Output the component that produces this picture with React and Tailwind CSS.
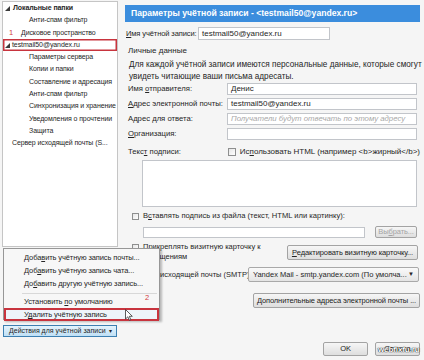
import React from "react";

const Tri = () => (
  <svg width="5" height="5" viewBox="0 0 5 5" className="shrink-0">
    <path d="M5 0 L5 5 L0 5 Z" fill="#3a3a3a" />
  </svg>
);

const Box = ({ className = "" }) => (
  <div className={"shrink-0 border border-[#8e8f8f] bg-gradient-to-br from-[#e6e6e6] to-white " + className} />
);

const Btn = ({ children, className = "" }) => (
  <div className={"flex items-center justify-center border border-[#a3a3a3] rounded-[2px] bg-gradient-to-b from-[#f6f6f6] to-[#dedede] text-[#222] text-[7.5px] tracking-[-0.1px] " + className}>
    {children}
  </div>
);

const Field = ({ children, className = "" }) => (
  <div className={"flex items-center border border-[#c2c5ca] bg-white px-[3px] overflow-hidden " + className}>{children}</div>
);

export default function App() {
  const tree = [
    { t: "Анти-спам фильтр", x: "pl-[26px]" },
    { t: "Дисковое пространство", x: "pl-[18px]", n: true },
  ];
  const sub = [
    "Параметры сервера",
    "Копии и папки",
    "Составление и адресация",
    "Анти-спам фильтр",
    "Синхронизация и хранение",
    "Уведомления о прочтении",
    "Защита",
  ];
  return (
    <div className="relative flex w-[424px] h-[360px] overflow-hidden whitespace-nowrap bg-[#f5f5f5] font-['Liberation_Sans',Arial,sans-serif] text-[8px] text-[#262626]">
      {/* left column */}
      <div className="flex flex-col w-[124px] pl-[2px] pt-[1px]">
        <div className="w-[116px] h-[246px] bg-white border border-[#c5c5c5] leading-[12.3px] text-[7px] tracking-[-0.1px]">
          <div className="flex items-center gap-[3px] pl-[2px] h-[12.3px] font-bold">
            <Tri />
            <span>Локальные папки</span>
          </div>
          {tree.map((r) => (
            <div key={r.t} className={"relative flex items-center h-[12.3px] " + r.x}>
              {r.n && <span className="absolute left-[6px] text-[#d23c3c] text-[7.5px]">1</span>}
              <span>{r.t}</span>
            </div>
          ))}
          <div className="flex items-center gap-[2px] pl-[2px] h-[12.3px] shadow-[inset_0_0_0_1.5px_#c8343e]">
            <Tri />
            <span>testmail50@yandex.ru</span>
          </div>
          {sub.map((t, i) => (
            <div key={i} className="flex items-center h-[12.3px] pl-[26px]">{t}</div>
          ))}
          <div className="flex items-center h-[12.3px] pl-[9px]">Сервер исходящей почты (S...</div>
        </div>
        <div className="mt-auto mb-[23px] ml-[1px] w-[114px] h-[12px] flex items-center pl-[5px] border border-[#3c7fb1] bg-gradient-to-b from-[#e4f3fc] to-[#bfe0f6] text-[7px]">
          <span><span className="underline">Д</span>ействия для учётной записи</span>
          <span className="ml-[3px] text-[6px]">▾</span>
        </div>
      </div>

      {/* right column */}
      <div className="flex flex-col w-[296px] pt-[5px]">
        <div className="ml-[1px] h-[17px] bg-[#3b8ddd] text-white font-bold text-[8.6px] leading-[17px] pl-[6px]">
          Параметры учётной записи - &lt;testmail50@yandex.ru&gt;
        </div>
        <div className="flex items-center mt-[5px] h-[13px] pl-[2px]">
          <span className="w-[72px] text-[7.5px] tracking-[-0.1px]"><span className="underline">И</span>мя учётной записи:</span>
          <Field className="w-[132px] h-[13px]">testmail50@yandex.ru</Field>
        </div>
        <div className="mt-[5px] h-[12px] leading-[12px] pl-[4px]">Личные данные</div>
        <div className="mt-[2px] pl-[5px] leading-[12px] text-[8.2px]">
          Для каждой учётной записи имеются персональные данные, которые смогут
          <br />
          увидеть читающие ваши письма адресаты.
        </div>
        <div className="flex flex-col gap-[3px] pl-[4px]">
          <div className="flex items-center h-[12px]">
            <span className="w-[99px] text-[7.7px]">Имя <span className="underline">о</span>тправителя:</span>
            <Field className="w-[190px] h-[12px]">Денис</Field>
          </div>
          <div className="flex items-center h-[12px]">
            <span className="w-[99px] text-[7.7px]"><span className="underline">А</span>дрес электронной почты:</span>
            <Field className="w-[190px] h-[12px]">testmail50@yandex.ru</Field>
          </div>
          <div className="flex items-center h-[12px]">
            <span className="w-[99px] text-[7.7px]">Адрес для ответа:</span>
            <Field className="w-[190px] h-[12px] italic text-[#a8a8a8] text-[7.8px]">Получатели будут отвечать по этому адресу</Field>
          </div>
          <div className="flex items-center h-[12px]">
            <span className="w-[99px] text-[7.7px]"><span className="underline">О</span>рганизация:</span>
            <Field className="w-[190px] h-[12px]" />
          </div>
        </div>
        <div className="flex items-center mt-[6px] h-[12px] pl-[4px]">
          <span className="w-[101px] text-[7.7px]">Текс<span className="underline">т</span> подписи:</span>
          <Box className="w-[8px] h-[8px]" />
          <span className="ml-[4px]">Ис<span className="underline">п</span>ользовать HTML (например &lt;b&gt;жирный&lt;/b&gt;)</span>
        </div>
        <div className="mt-[2px] ml-[18px] w-[275px] h-[47px] bg-white border border-[#c2c5ca]" />
        <div className="flex items-center mt-[3px] h-[12px] pl-[8px] text-[7.6px]">
          <Box className="w-[7px] h-[7px]" />
          <span className="ml-[4px]">В<span className="underline">с</span>тавлять подпись из файла (текст, HTML или картинку):</span>
        </div>
        <div className="flex items-center mt-[4px] h-[12px] pl-[19px]">
          <Field className="w-[222px] h-[11px]" />
          <Btn className="ml-[10px] w-[42px] h-[12px] !text-[#a4a4a4]">Вы<span className="underline">б</span>рать...</Btn>
        </div>
        <div className="flex mt-[4px] pl-[8px] text-[7.5px]">
          <Box className="w-[7px] h-[7px] mt-[2px]" />
          <div className="ml-[4px] w-[140px] leading-[10px]">
            Прикреплять визитную карточку к<br />сообщениям
          </div>
          <Btn className="ml-[4px] mt-[3px] w-[131px] h-[15px]"><span className="underline">Р</span>едактировать визитную карточку...</Btn>
        </div>
        <div className="flex items-center mt-[5px] h-[15px] pl-[8px] text-[7.5px]">
          <span className="w-[116px]">Сервер исходящей почты (SMTP)</span>
          <div className="flex items-center justify-between w-[171px] h-[15px] px-[4px] border border-[#a9a9a9] rounded-[2px] bg-gradient-to-b from-[#fafafa] to-[#e4e4e4]">
            <span>Yandex Mail - smtp.yandex.com (По умолча...</span>
            <span className="text-[6px]">▼</span>
          </div>
        </div>
        <div className="flex justify-end mt-[11px]">
          <Btn className="w-[167px] h-[15px]"><span className="underline">Д</span>ополнительные адреса электронной почты ...</Btn>
        </div>
        <div className="flex justify-end gap-[7px] mt-[34px]">
          <Btn className="w-[45px] h-[14px]">OK</Btn>
          <Btn className="relative w-[45px] h-[14px]">
            Отмена
            <span className="absolute left-[2px] top-[3px] text-[8px] font-bold text-white [text-shadow:0_0_1px_#000,0_0_1px_#000] leading-none">webfixfu.ru</span>
          </Btn>
        </div>
      </div>

      {/* popup menu */}
      <div className="absolute left-[3px] top-[248px] w-[157px] h-[72px] bg-[#f7f7f7] border border-[#979797] shadow-[2px_2px_2px_rgba(0,0,0,0.25)] pt-[2px] text-[7.5px] tracking-[-0.1px]">
        <div className="h-[13px] leading-[13px] pl-[20px]">Доба<span className="underline">в</span>ить учётную запись почты...</div>
        <div className="h-[13px] leading-[13px] pl-[20px]">Доб<span className="underline">а</span>вить учётную запись чата...</div>
        <div className="h-[13px] leading-[13px] pl-[20px]">До<span className="underline">б</span>авить другую учётную запись...</div>
        <div className="h-[6px] flex items-center pl-[18px] pr-[2px]"><div className="h-px w-full bg-[#d8d8d8]" /></div>
        <div className="relative h-[12px] leading-[12px] pl-[20px]">
          Установить <span className="underline">п</span>о умолчанию
          <span className="absolute right-[10px] top-[-4px] text-[#d23c3c]">2</span>
        </div>
        <div className="h-[13px] leading-[13px] pl-[20px] shadow-[inset_0_0_0_2px_#c8343e] bg-[#eef4fa]">У<span className="underline">д</span>алить учётную запись</div>
      </div>

      {/* cursor */}
      <svg className="absolute left-[125px] top-[309px]" width="8" height="12" viewBox="0 0 8 12">
        <path d="M0.5 0.5 L0.5 10 L2.8 7.8 L4.4 11.3 L5.8 10.7 L4.3 7.3 L7.3 7.3 Z" fill="#fff" stroke="#333" strokeWidth="0.8" />
      </svg>
    </div>
  );
}
